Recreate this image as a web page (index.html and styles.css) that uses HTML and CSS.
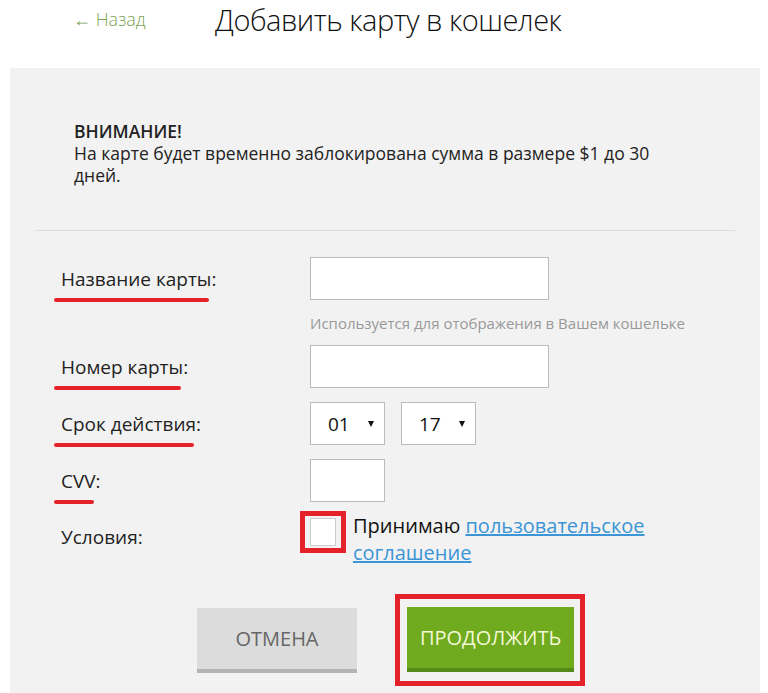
FILE: index.html
```html
<!DOCTYPE html>
<html lang="ru">
<head>
<meta charset="UTF-8">
<meta name="viewport" content="width=device-width, initial-scale=1.0">
<title>Добавить карту в кошелек</title>
<link rel="stylesheet" href="styles.css">
</head>
<body>
<div class="top-bar">
  <a class="back-link" href="#">&larr; Назад</a>
  <h1 class="page-title">Добавить карту в кошелек</h1>
</div>

<div class="panel">
  <div class="notice">
    <p><strong>ВНИМАНИЕ!</strong><br>
    На карте будет временно заблокирована сумма в размере $1 до 30 дней.</p>
  </div>

  <form class="card-form">
    <div class="form-row">
      <label class="field-label marked" for="card-name">Название карты:</label>
      <input class="text-input wide" id="card-name" type="text">
    </div>
    <div class="form-hint">Используется для отображения в Вашем кошельке</div>

    <div class="form-row">
      <label class="field-label marked" for="card-number">Номер карты:</label>
      <input class="text-input wide" id="card-number" type="text">
    </div>

    <div class="form-row row-tight">
      <label class="field-label marked" for="exp-month">Срок действия:</label>
      <div class="expiry">
        <span class="select-wrap">
          <select id="exp-month"><option>01</option><option>02</option><option>03</option></select>
        </span>
        <span class="select-wrap">
          <select id="exp-year"><option>17</option><option>18</option><option>19</option></select>
        </span>
      </div>
    </div>

    <div class="form-row row-tight">
      <label class="field-label marked" for="cvv">CVV:</label>
      <input class="text-input short" id="cvv" type="text">
    </div>

    <div class="form-row row-terms">
      <span class="field-label">Условия:</span>
      <div class="terms">
        <span class="highlight check-frame"><input type="checkbox" id="agree"></span>
        <p class="terms-text">Принимаю <a href="#">пользовательское соглашение</a></p>
      </div>
    </div>

    <div class="actions">
      <button type="button" class="btn btn-cancel">ОТМЕНА</button>
      <span class="highlight btn-frame"><button type="submit" class="btn btn-next">ПРОДОЛЖИТЬ</button></span>
    </div>
  </form>
</div>
</body>
</html>
```

FILE: styles.css
```css
body {
  margin: 0;
  font-family: "Open Sans", Arial, sans-serif;
  color: #222;
  background: #fff;
}
.top-bar {
  height: 68px;
  display: flex;
  align-items: center;
  padding-left: 73px;
  box-sizing: border-box;
  padding-bottom: 30px;
}
.back-link {
  color: #7ba454;
  text-decoration: none;
  font-size: 18px;
  font-weight: 300;
  width: 142px;
}
.page-title {
  margin: 0;
  font-size: 29px;
  font-weight: 300;
  letter-spacing: -0.5px;
  color: #111;
}
.panel {
  background: #f2f2f2;
  margin: 0 8px 0 10px;
  padding: 52px 25px 30px;
  min-height: 560px;
}
.notice {
  padding-left: 39px;
  padding-bottom: 44px;
  border-bottom: 1px solid #ddd;
}
.notice p {
  margin: 0;
  max-width: 600px;
  font-size: 17.5px;
  line-height: 22px;
}
.notice strong {
  font-weight: 600;
}
.card-form {
  padding-top: 26px;
}
.form-row {
  display: grid;
  grid-template-columns: 249px auto;
  align-items: center;
  padding-left: 26px;
}
.row-tight {
  margin-top: 14px;
}
.row-terms {
  margin-top: 9px;
  align-items: start;
}
.field-label {
  position: relative;
  font-size: 19px;
  justify-self: start;
}
.row-terms .field-label {
  padding-top: 13px;
}
/* red marker strokes under the required labels */
.field-label.marked::after {
  content: "";
  position: absolute;
  left: -7px;
  right: 7px;
  bottom: -10px;
  height: 4px;
  border-radius: 2px;
  background: #e3222a;
}
.text-input {
  height: 43px;
  box-sizing: border-box;
  border: 1px solid #bbb;
  background: #fff;
  font-size: 16px;
  padding: 0 10px;
}
.wide {
  width: 239px;
}
.short {
  width: 75px;
}
.form-hint {
  padding-left: 275px;
  height: 45px;
  line-height: 47px;
  font-size: 15px;
  color: #999;
}
.expiry {
  display: flex;
  gap: 16px;
}
.select-wrap {
  position: relative;
  display: inline-block;
}
.select-wrap::after {
  content: "";
  position: absolute;
  right: 11px;
  top: 19px;
  border-left: 3px solid transparent;
  border-right: 3px solid transparent;
  border-top: 6px solid #111;
  pointer-events: none;
}
select {
  appearance: none;
  -webkit-appearance: none;
  width: 75px;
  height: 43px;
  border: 1px solid #bbb;
  border-radius: 0;
  background: #fff;
  font-family: inherit;
  font-size: 19px;
  color: #111;
  padding-left: 17px;
}
.highlight {
  border: 5px solid #e3222a;
  box-sizing: border-box;
}
.terms {
  display: flex;
  align-items: flex-start;
  margin-left: -10px;
}
.check-frame {
  display: inline-flex;
  flex-shrink: 0;
  width: 46px;
  height: 42px;
  padding: 2px 5px;
}
.check-frame input {
  appearance: none;
  -webkit-appearance: none;
  margin: 0;
  width: 26px;
  height: 28px;
  border: 1px solid #ccc;
  background: #fff;
}
.terms-text {
  margin: 0 0 0 7px;
  font-size: 20px;
  line-height: 27px;
  color: #111;
  max-width: 310px;
  padding-top: 1px;
}
.terms-text a {
  color: #3b95d6;
}
.actions {
  display: flex;
  align-items: center;
  padding-left: 162px;
  margin-top: 28px;
  gap: 38px;
}
.btn {
  font-family: inherit;
  font-size: 20px;
  border: none;
  cursor: pointer;
  height: 65px;
}
.btn-cancel {
  width: 160px;
  background: #dcdcdc;
  color: #666;
  border-bottom: 4px solid #b4b4b4;
}
.btn-frame {
  display: inline-block;
  padding: 8px 6px 9px 7px;
}
.btn-next {
  width: 167px;
  background: #6faa1f;
  color: #f3f8d6;
  border-bottom: 4px solid #558a1b;
  display: block;
}
```
